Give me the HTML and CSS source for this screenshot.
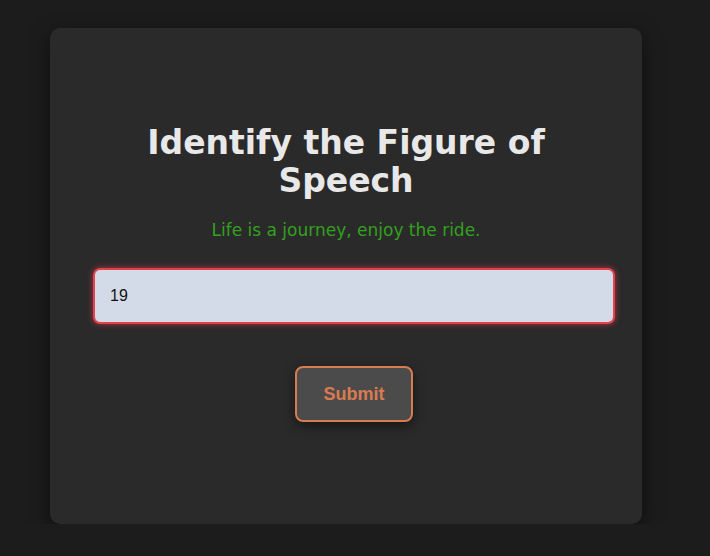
FILE: index.html
```html
<!DOCTYPE html>
<html lang="en">
<head>
    <meta charset="UTF-8">
    <meta name="viewport" content="width=device-width, initial-scale=1.0">
    <title>Identify the Figure of Speech</title>
    <link rel="stylesheet" href="styles.css">
</head>
<body>
    <div class="card">
        <h1 class="title">Identify the Figure of Speech</h1>
        <p class="sentence">Life is a journey, enjoy the ride.</p>
        <form class="quiz-form">
            <input type="text" class="answer" value="19">
            <button type="submit" class="submit-btn">Submit</button>
        </form>
    </div>
</body>
</html>
```

FILE: styles.css
```css
body {
    margin: 0;
    background: #1c1c1c;
    font-family: "DejaVu Sans", Verdana, sans-serif;
    padding: 28px 0 0 50px;
}
.card {
    width: 592px;
    height: 496px;
    box-sizing: border-box;
    background: #2a2a2a;
    border-radius: 10px;
    box-shadow: 0 6px 20px rgba(0, 0, 0, 0.5);
    padding: 96px 35px 0;
    text-align: center;
}
.title {
    margin: 0 auto;
    max-width: 420px;
    font-size: 33px;
    line-height: 38px;
    font-weight: bold;
    color: #e8e8e8;
}
.sentence {
    margin: 20px 0 0;
    font-size: 17px;
    color: #32a11e;
}
.quiz-form {
    display: flex;
    flex-direction: column;
    align-items: center;
    gap: 42px;
    width: 522px;
    margin: 28px 0 0 8px;
}
.answer {
    width: 522px;
    height: 56px;
    box-sizing: border-box;
    padding: 0 15px;
    border: 2px solid #e3414d;
    border-radius: 7px;
    background: #d4dbe8;
    box-shadow: 0 0 6px rgba(230, 60, 75, 0.7);
    font-family: "Liberation Sans", Arial, sans-serif;
    font-size: 16px;
    color: #111;
    outline: none;
}
.submit-btn {
    width: 118px;
    height: 56px;
    background: #4b4b4b;
    border: 2px solid #d97b50;
    border-radius: 8px;
    box-shadow: 0 4px 12px rgba(0, 0, 0, 0.5);
    font-family: "Liberation Sans", Arial, sans-serif;
    font-size: 18px;
    font-weight: bold;
    color: #d97b50;
    cursor: pointer;
}
```
